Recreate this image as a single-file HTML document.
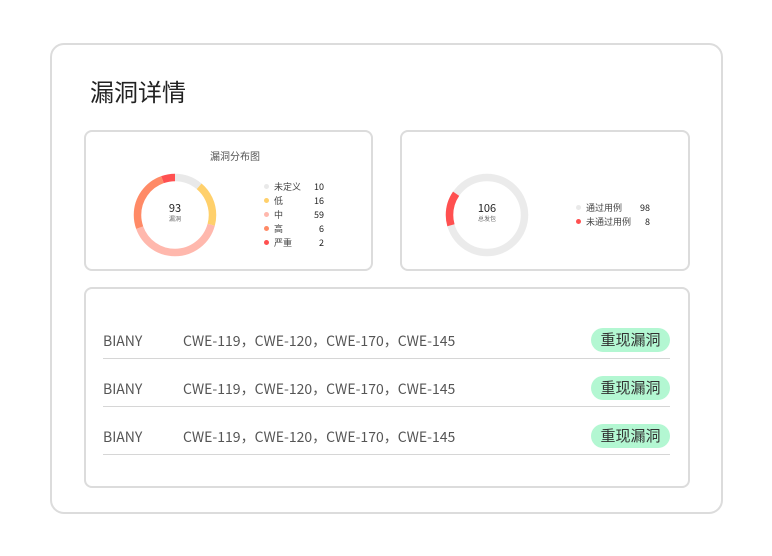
<!DOCTYPE html>
<html><head><meta charset="utf-8"><style>
*{margin:0;padding:0;box-sizing:border-box}
body{width:772px;height:556px;background:#fff;font-family:"Noto Sans CJK SC","Liberation Sans",sans-serif;position:relative;overflow:hidden;color:#333}
.abs{position:absolute}
.outer{left:50px;top:43px;width:673px;height:471px;border:2px solid #dcdcdc;border-radius:14px}
.card{border:2px solid #dcdcdc;border-radius:8px}
.t{font-size:24px;left:90px;top:74px;color:#222;white-space:nowrap;line-height:34px}
.lg{font-size:9px;color:#444;white-space:nowrap}
.dot{display:inline-block;width:5px;height:5px;border-radius:50%;margin-right:5px;vertical-align:1px}
.row{left:103px;width:567px;height:48px;border-bottom:1px solid #d6d6d6;font-size:14px;color:#555}
.row span{position:absolute;top:20px;line-height:20px;white-space:nowrap}
.badge{position:absolute;right:0;top:17px!important;width:79px;height:24px;line-height:24px!important;border-radius:12px;background:#b3f7d2;text-align:center;font-size:15px;color:#333}
</style></head><body>
<div class="abs outer"></div>
<div class="abs t">漏洞详情</div>

<div class="abs card" style="left:84px;top:130px;width:289px;height:141px"></div>
<div class="abs" style="left:210px;top:148px;font-size:10px;color:#555">漏洞分布图</div>
<svg class="abs" style="left:130px;top:170px" width="90" height="90" viewBox="0 0 90 90">
<g transform="rotate(-90 45 45)" fill="none" stroke-width="7.5">
<circle cx="45" cy="45" r="37.5" stroke="#e9e9e9" stroke-dasharray="26.2 300" stroke-dashoffset="0"/>
<circle cx="45" cy="45" r="37.5" stroke="#ffd06b" stroke-dasharray="42.5 300" stroke-dashoffset="-26.2"/>
<circle cx="45" cy="45" r="37.5" stroke="#ffb8ad" stroke-dasharray="94.9 300" stroke-dashoffset="-68.7"/>
<circle cx="45" cy="45" r="37.5" stroke="#ff8a66" stroke-dasharray="58.9 300" stroke-dashoffset="-163.6"/>
<circle cx="45" cy="45" r="37.5" stroke="#ff5050" stroke-dasharray="13.1 300" stroke-dashoffset="-222.5"/>
</g></svg>
<div class="abs" style="left:155px;top:200px;width:40px;text-align:center;font-size:11px;color:#222">93</div>
<div class="abs" style="left:155px;top:214px;width:40px;text-align:center;font-size:6px;color:#666">漏洞</div>
<div class="abs lg" style="left:264px;top:180px;line-height:14px">
<div><span class="dot" style="background:#e9e9e9"></span>未定义</div>
<div><span class="dot" style="background:#ffd06b"></span>低</div>
<div><span class="dot" style="background:#ffb8ad"></span>中</div>
<div><span class="dot" style="background:#ff8a66"></span>高</div>
<div><span class="dot" style="background:#ff5050"></span>严重</div>
</div>
<div class="abs lg" style="left:300px;width:24px;text-align:right;top:180px;line-height:14px;color:#222">
<div>10</div><div>16</div><div>59</div><div>6</div><div>2</div></div>

<div class="abs card" style="left:400px;top:130px;width:290px;height:141px"></div>
<svg class="abs" style="left:442px;top:170px" width="90" height="90" viewBox="0 0 90 90">
<g transform="rotate(-90 45 45)" fill="none" stroke-width="7.5">
<circle cx="45" cy="45" r="37.5" stroke="#ebebeb"/>
<circle cx="45" cy="45" r="37.5" stroke="#ff5050" stroke-dasharray="33 300" stroke-dashoffset="-166"/>
</g></svg>
<div class="abs" style="left:467px;top:200px;width:40px;text-align:center;font-size:11px;color:#222">106</div>
<div class="abs" style="left:467px;top:214px;width:40px;text-align:center;font-size:6px;color:#666">总发包</div>
<div class="abs lg" style="left:576px;top:201px;line-height:14px">
<div><span class="dot" style="background:#e9e9e9"></span>通过用例</div>
<div><span class="dot" style="background:#ff5050"></span>未通过用例</div>
</div>
<div class="abs lg" style="left:626px;width:24px;text-align:right;top:201px;line-height:14px;color:#222"><div>98</div><div>8</div></div>

<div class="abs card" style="left:84px;top:287px;width:606px;height:201px"></div>
<div class="abs row" style="top:311px"><span style="left:0">BIANY</span><span style="left:80px">CWE-119，CWE-120，CWE-170，CWE-145</span><span class="badge">重现漏洞</span></div>
<div class="abs row" style="top:359px"><span style="left:0">BIANY</span><span style="left:80px">CWE-119，CWE-120，CWE-170，CWE-145</span><span class="badge">重现漏洞</span></div>
<div class="abs row" style="top:407px"><span style="left:0">BIANY</span><span style="left:80px">CWE-119，CWE-120，CWE-170，CWE-145</span><span class="badge">重现漏洞</span></div>
</body></html>
